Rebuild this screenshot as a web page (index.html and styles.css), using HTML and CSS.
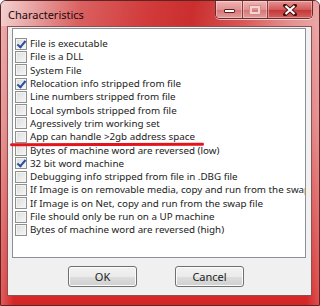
FILE: index.html
```html
<!DOCTYPE html>
<html lang="en">
<head>
    <meta charset="UTF-8" />
    <title>Characteristics</title>
    <link rel="stylesheet" href="styles.css">
</head>
<body>
    <div class="window">
        <div class="titlebar">
            <div class="title">Characteristics</div>
            <div class="caption-btns">
                <div class="cbtn cbtn-min"><span class="min-bar"></span></div>
                <div class="cbtn cbtn-max"><span class="max-box"></span></div>
                <div class="cbtn cbtn-close">
                    <svg width="14" height="12" viewBox="0 0 14 12">
                        <path d="M2 1.5 L12 10.5 M12 1.5 L2 10.5" stroke="#4a1010" stroke-width="4" stroke-linecap="round"/>
                        <path d="M2.5 2 L11.5 10 M11.5 2 L2.5 10" stroke="#fff" stroke-width="2.2"/>
                    </svg>
                </div>
            </div>
        </div>

        <div class="client">
            <div class="list">
                <label class="row"><span class="box checked"></span>File is executable</label>
                <label class="row"><span class="box"></span>File is a DLL</label>
                <label class="row"><span class="box"></span>System File</label>
                <label class="row"><span class="box checked"></span>Relocation info stripped from file</label>
                <label class="row"><span class="box"></span>Line numbers stripped from file</label>
                <label class="row"><span class="box"></span>Local symbols stripped from file</label>
                <label class="row"><span class="box"></span>Agressively trim working set</label>
                <label class="row"><span class="box"></span>App can handle &gt;2gb address space</label>
                <label class="row"><span class="box"></span>Bytes of machine word are reversed (low)</label>
                <label class="row"><span class="box checked"></span>32 bit word machine</label>
                <label class="row"><span class="box"></span>Debugging info stripped from file in .DBG file</label>
                <label class="row"><span class="box"></span>If Image is on removable media, copy and run from the swap file</label>
                <label class="row"><span class="box"></span>If Image is on Net, copy and run from the swap file</label>
                <label class="row"><span class="box"></span>File should only be run on a UP machine</label>
                <label class="row"><span class="box"></span>Bytes of machine word are reversed (high)</label>
            </div>

            <div class="actions">
                <button class="btn">OK</button>
                <button class="btn">Cancel</button>
            </div>
        </div>

        <div class="marker"></div>
    </div>
</body>
</html>
```

FILE: styles.css
```css
* {
    margin: 0;
    padding: 0;
    box-sizing: border-box;
}

body {
    width: 320px;
    height: 306px;
    overflow: hidden;
    background: #fff;
    font-family: 'Noto Sans', sans-serif;
}

.window {
    position: relative;
    width: 320px;
    height: 306px;
    display: flex;
    flex-direction: column;
    padding: 0 7px 9px 6px;
    border: 1px solid #5e2424;
    border-radius: 6px 6px 0 0;
    background:
        linear-gradient(to right, rgba(255,255,255,0.25), rgba(255,255,255,0) 4%, rgba(255,255,255,0) 96%, rgba(255,255,255,0.2)),
        linear-gradient(to bottom, #e79a9a 0%, #e07a7a 40%, #d84646 75%, #d42424 100%);
}

.titlebar {
    height: 25px;
    margin: 0 -7px 0 -6px;
    padding-left: 7px;
    display: flex;
    align-items: flex-start;
    border-radius: 5px 5px 0 0;
    background: linear-gradient(100deg, #f4d2d2 0%, #e9a4a4 10%, #db6060 25%, #d23c3c 45%, #cb2e2e 60%, #d65454 75%, #e48e8e 90%, #eaa7a7 100%);
}

.title {
    font-size: 11px;
    color: #1a0a0a;
    line-height: 27px;
}

.caption-btns {
    margin-left: auto;
    margin-right: 6px;
    display: flex;
    height: 18px;
    border: 1px solid #6a2a2a;
    border-top: none;
    border-radius: 0 0 5px 5px;
    overflow: hidden;
    box-shadow: 0 1px 0 rgba(255,255,255,0.6);
}

.cbtn {
    height: 17px;
    display: flex;
    align-items: center;
    justify-content: center;
    border-right: 1px solid #8a3a3a;
    box-shadow: inset 0 0 0 1px rgba(255,255,255,0.35);
}

.cbtn-min {
    width: 27px;
    background: linear-gradient(to bottom, #efb5b5, #e29090 50%, #d67272 51%, #e29c9c);
}

.cbtn-max {
    width: 25px;
    background: linear-gradient(to bottom, #efb5b5, #e29090 50%, #d67272 51%, #e29c9c);
}

.cbtn-close {
    width: 44px;
    border-right: none;
    background: linear-gradient(to bottom, #e49494, #d25a5a 50%, #c23434 51%, #d46060);
}

.min-bar {
    width: 11px;
    height: 4px;
    margin-top: 3px;
    background: #fff;
    border: 1px solid #5a2020;
    border-radius: 1px;
}

.max-box {
    width: 10px;
    height: 8px;
    border: 2px solid #f6d4d4;
    outline: 1px solid #d28a8a;
}

.client {
    flex: 1;
    display: flex;
    flex-direction: column;
    padding: 1px 5px 0 4px;
    background: #f0f0f0;
    border: 1px solid #8c5050;
}

.list {
    height: 230px;
    padding: 8px 0 0 2px;
    background: #fff;
    border: 1px solid #8c9098;
    overflow: hidden;
}

.row {
    display: flex;
    align-items: center;
    height: 13.3px;
    font-size: 9.8px;
    color: #222;
    white-space: nowrap;
}

.box {
    flex: none;
    width: 12px;
    height: 12px;
    margin-right: 3px;
    border: 1px solid #8e8f8f;
    background: linear-gradient(135deg, #dcdcdc, #f6f6f6);
    box-shadow: inset 0 0 0 1px #f4f4f4;
    position: relative;
}

.box.checked::after {
    content: "";
    position: absolute;
    left: 3px;
    top: 0px;
    width: 3px;
    height: 7px;
    border: solid #2a4f9c;
    border-width: 0 2px 2px 0;
    transform: rotate(40deg);
}

.actions {
    flex: 1;
    display: flex;
    justify-content: center;
    align-items: center;
    gap: 38px;
    padding-right: 6px;
}

.btn {
    width: 69px;
    height: 21px;
    font-family: 'Noto Sans', sans-serif;
    font-size: 11px;
    color: #222;
    border: 1px solid #707070;
    border-radius: 3px;
    background: linear-gradient(to bottom, #f2f2f2, #ebebeb 50%, #dddddd 51%, #cfcfcf);
    box-shadow: inset 0 0 0 1px #fbfbfb;
}

.marker {
    position: absolute;
    left: 9px;
    top: 142px;
    width: 194px;
    height: 3px;
    border-radius: 2px;
    background: #e3141c;
    transform: rotate(-0.2deg);
}
```
